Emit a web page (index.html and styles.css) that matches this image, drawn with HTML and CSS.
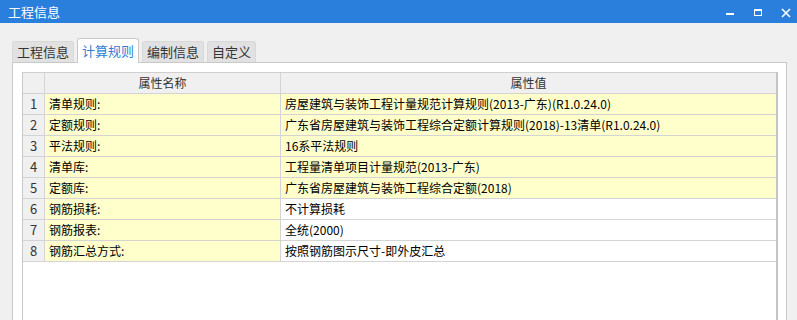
FILE: index.html
```html
<!DOCTYPE html>
<html>
<head>
    <title>工程信息</title>
    <meta charset="utf-8">
    <link rel="stylesheet" href="styles.css">
</head>
<body>
    <div class="titlebar">
        <span class="title">工程信息</span>
        <div class="controls">
            <svg width="10" height="10" viewBox="0 0 10 10"><rect x="1" y="5" width="8" height="2" fill="#fff"/></svg>
            <svg width="10" height="10" viewBox="0 0 10 10"><rect x="1.5" y="1.5" width="7" height="6" fill="none" stroke="#fff"/><rect x="1" y="1" width="8" height="2" fill="#fff"/></svg>
            <svg width="10" height="10" viewBox="0 0 10 10"><path d="M1 1 L9 9 M9 1 L1 9" stroke="#fff" stroke-width="1.6"/></svg>
        </div>
    </div>

    <div class="main">
        <div class="tabs">
            <div class="tab">工程信息</div>
            <div class="tab active">计算规则</div>
            <div class="tab">编制信息</div>
            <div class="tab">自定义</div>
        </div>
        <div class="pane">
            <div class="grid">
                <table>
                    <tr>
                        <th class="num"></th>
                        <th class="name">属性名称</th>
                        <th>属性值</th>
                    </tr>
                    <tr><td class="num">1</td><td class="name">清单规则:</td><td class="val">房屋建筑与装饰工程计量规范计算规则(2013-广东)(R1.0.24.0)</td></tr>
                    <tr><td class="num">2</td><td class="name">定额规则:</td><td class="val">广东省房屋建筑与装饰工程综合定额计算规则(2018)-13清单(R1.0.24.0)</td></tr>
                    <tr><td class="num">3</td><td class="name">平法规则:</td><td class="val">16系平法规则</td></tr>
                    <tr><td class="num">4</td><td class="name">清单库:</td><td class="val">工程量清单项目计量规范(2013-广东)</td></tr>
                    <tr><td class="num">5</td><td class="name">定额库:</td><td class="val">广东省房屋建筑与装饰工程综合定额(2018)</td></tr>
                    <tr><td class="num">6</td><td class="name">钢筋损耗:</td><td>不计算损耗</td></tr>
                    <tr><td class="num">7</td><td class="name">钢筋报表:</td><td>全统(2000)</td></tr>
                    <tr><td class="num">8</td><td class="name">钢筋汇总方式:</td><td>按照钢筋图示尺寸-即外皮汇总</td></tr>
                </table>
            </div>
        </div>
    </div>
</body>
</html>
```

FILE: styles.css
```css
html, body {
    margin: 0;
    height: 100%;
    overflow: hidden;
}
body {
    font-family: "Noto Sans CJK SC", "Noto Sans", sans-serif;
    background-color: #f0f0f0;
    color: #000;
    display: flex;
    flex-direction: column;
}
.titlebar {
    height: 23px;
    background-color: #2b7fdc;
    color: #fff;
    display: flex;
    align-items: center;
    justify-content: space-between;
    padding: 0 6px 0 8px;
    flex-shrink: 0;
}
.title {
    font-size: 13px;
    line-height: 23px;
}
.controls {
    display: flex;
    gap: 18px;
    align-items: center;
    margin-top: 2px;
}
.main {
    flex: 1;
    display: flex;
    flex-direction: column;
    padding: 15px 10px 0 12px;
}
.tabs {
    display: flex;
    align-items: flex-end;
    gap: 3px;
    height: 24px;
}
.tab {
    font-size: 13px;
    height: 20px;
    line-height: 20px;
    padding: 0 4px;
    background-color: #e1e1e1;
    border: 1px solid #d8d8d8;
    border-bottom: none;
    border-radius: 3px 3px 0 0;
    color: #333;
}
.tab.active {
    height: 24px;
    line-height: 24px;
    background-color: #fff;
    border-color: #c8c8c8;
    color: #2f7fd6;
    margin-bottom: -1px;
    position: relative;
    z-index: 1;
}
.pane {
    flex: 1;
    background-color: #fff;
    border: 1px solid #c9c9c9;
    border-bottom: none;
    padding: 9px 8px 0 9px;
    display: flex;
}
.grid {
    flex: 1;
    border-left: 1px solid #c8c8c8;
    border-right: 2px solid #c4c4c4;
    border-top: 1px solid #cfcfcf;
}
table {
    border-collapse: collapse;
    width: 100%;
    font-size: 12px;
}
th, td {
    height: 20px;
    padding: 0 0 0 4px;
    border-right: 1px solid #d4d4d4;
    border-bottom: 1px solid #d4d4d4;
    text-align: left;
    white-space: nowrap;
    line-height: 20px;
}
th {
    background-color: #f0f0f0;
    font-weight: normal;
    text-align: center;
    color: #333;
    padding: 0;
}
th:last-child, td:last-child {
    border-right: none;
}
td.num {
    width: 21px;
    padding: 0;
    text-align: center;
    background-color: #f0f0f0;
    color: #333;
    font-size: 13px;
}
th.num {
    width: 21px;
}
.name {
    width: 231px;
    background-color: #ffffcc;
}
th.name {
    background-color: #f0f0f0;
}
td.val {
    background-color: #ffffcc;
}
```
